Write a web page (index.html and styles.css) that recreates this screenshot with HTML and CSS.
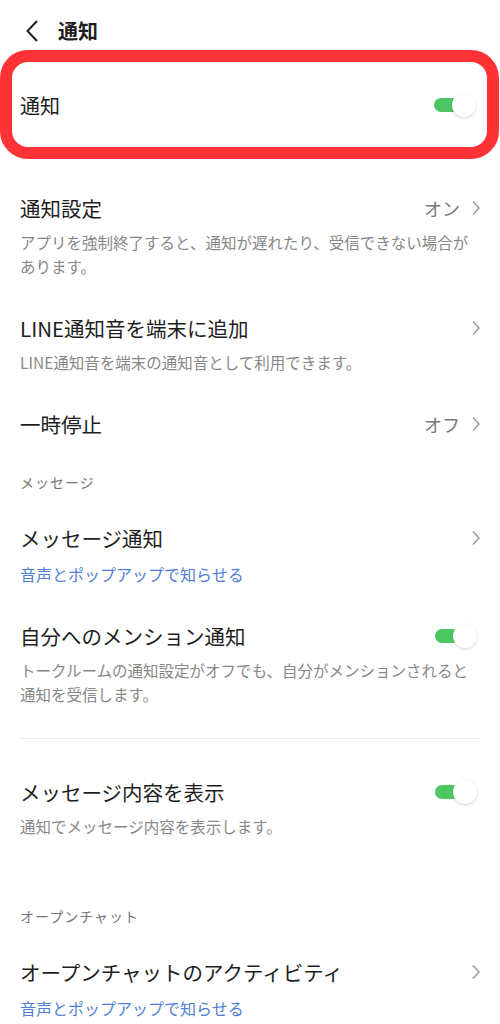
FILE: index.html
```html
<!DOCTYPE html>
<html lang="ja">
<head>
    <meta charset="utf-8">
    <title>通知</title>
    <link rel="stylesheet" href="styles.css">
</head>
<body>
    <div class="page">

        <div class="topbar">
            <svg class="back" width="12" height="22" viewBox="0 0 12 22"><path d="M11 1 L1.5 11 L11 21" stroke="#222" stroke-width="2" fill="none"/></svg>
            <h1>通知</h1>
        </div>

        <div class="mainbox">
            <span class="mainlabel">通知</span>
            <span class="toggle"></span>
        </div>

        <div class="list">
            <div class="item">
                <div class="head">
                    <span class="title">通知設定</span>
                    <span class="value">オン<svg class="chev" width="8" height="16" viewBox="0 0 8 16"><path d="M1 1.5 L7 8 L1 14.5" stroke="#9a9a9a" stroke-width="1.6" fill="none"/></svg></span>
                </div>
                <p class="desc">アプリを強制終了すると、通知が遅れたり、受信できない場合があります。</p>
            </div>

            <div class="item">
                <div class="head">
                    <span class="title">LINE通知音を端末に追加</span>
                    <span class="value"><svg class="chev" width="8" height="16" viewBox="0 0 8 16"><path d="M1 1.5 L7 8 L1 14.5" stroke="#9a9a9a" stroke-width="1.6" fill="none"/></svg></span>
                </div>
                <p class="desc">LINE通知音を端末の通知音として利用できます。</p>
            </div>

            <div class="item">
                <div class="head">
                    <span class="title">一時停止</span>
                    <span class="value">オフ<svg class="chev" width="8" height="16" viewBox="0 0 8 16"><path d="M1 1.5 L7 8 L1 14.5" stroke="#9a9a9a" stroke-width="1.6" fill="none"/></svg></span>
                </div>
            </div>

            <div class="section">メッセージ</div>

            <div class="item">
                <div class="head">
                    <span class="title">メッセージ通知</span>
                    <span class="value"><svg class="chev" width="8" height="16" viewBox="0 0 8 16"><path d="M1 1.5 L7 8 L1 14.5" stroke="#9a9a9a" stroke-width="1.6" fill="none"/></svg></span>
                </div>
                <p class="desc link">音声とポップアップで知らせる</p>
            </div>

            <div class="item">
                <div class="head">
                    <span class="title">自分へのメンション通知</span>
                    <span class="toggle"></span>
                </div>
                <p class="desc">トークルームの通知設定がオフでも、自分がメンションされると通知を受信します。</p>
            </div>

            <div class="divider"></div>

            <div class="item">
                <div class="head">
                    <span class="title">メッセージ内容を表示</span>
                    <span class="toggle"></span>
                </div>
                <p class="desc">通知でメッセージ内容を表示します。</p>
            </div>

            <div class="section far">オープンチャット</div>

            <div class="item">
                <div class="head">
                    <span class="title">オープンチャットのアクティビティ</span>
                    <span class="value"><svg class="chev" width="8" height="16" viewBox="0 0 8 16"><path d="M1 1.5 L7 8 L1 14.5" stroke="#9a9a9a" stroke-width="1.6" fill="none"/></svg></span>
                </div>
                <p class="desc link">音声とポップアップで知らせる</p>
            </div>
        </div>
    </div>
</body>
</html>
```

FILE: styles.css
```css
body,html{
    margin: 0;
    padding: 0;
    background-color: #fff;
}
.page{
    font-family: "Noto Sans CJK JP", "Noto Sans", sans-serif;
    color: #1e1e1e;
}
.topbar{
    display: flex;
    align-items: center;
    height: 30px;
    padding: 16px 0 4px 26px;
}
.back{
    margin-right: 20px;
}
h1{
    margin: 0;
    font-size: 20px;
    font-weight: bold;
    line-height: 30px;
}
.mainbox{
    display: flex;
    align-items: center;
    justify-content: space-between;
    height: 85px;
    margin-right: 1px;
    padding: 0 11px 0 8px;
    border: 12px solid #ff3236;
    border-radius: 28px;
}
.mainlabel{
    font-size: 20px;
    line-height: 30px;
    padding-top: 3px;
}
.toggle{
    position: relative;
    display: inline-block;
    width: 42px;
    height: 24px;
}
.toggle::before{
    content: "";
    position: absolute;
    left: 0;
    top: 5px;
    width: 32px;
    height: 14px;
    border-radius: 7px;
    background-color: #4cc764;
}
.toggle::after{
    content: "";
    position: absolute;
    right: 0;
    top: 0;
    width: 24px;
    height: 24px;
    border-radius: 50%;
    background-color: #fff;
    box-shadow: 0 1px 3px rgba(0, 0, 0, 0.18);
}
.list{
    margin-top: 17px;
}
.item{
    padding: 17px 20px 18px;
}
.head{
    display: flex;
    align-items: center;
    justify-content: space-between;
    height: 30px;
}
.head .toggle{
    margin-right: 3px;
}
.title{
    font-size: 20.5px;
    line-height: 30px;
}
.value{
    display: flex;
    align-items: center;
    font-size: 18px;
    color: #777;
}
.chev{
    margin-left: 12px;
}
.desc{
    margin: 7px 0 0;
    font-size: 15.5px;
    line-height: 24px;
    color: #888;
}
.desc.link{
    margin-top: 9px;
    font-size: 16px;
    color: #4f7fd4;
}
.section{
    padding: 15px 20px 14px;
    font-size: 14px;
    letter-spacing: 1px;
    line-height: 20px;
    color: #777;
}
.section.far{
    margin-top: 35px;
}
.divider{
    height: 1px;
    margin: 14px 20px 21px;
    background-color: #ececec;
}
```
